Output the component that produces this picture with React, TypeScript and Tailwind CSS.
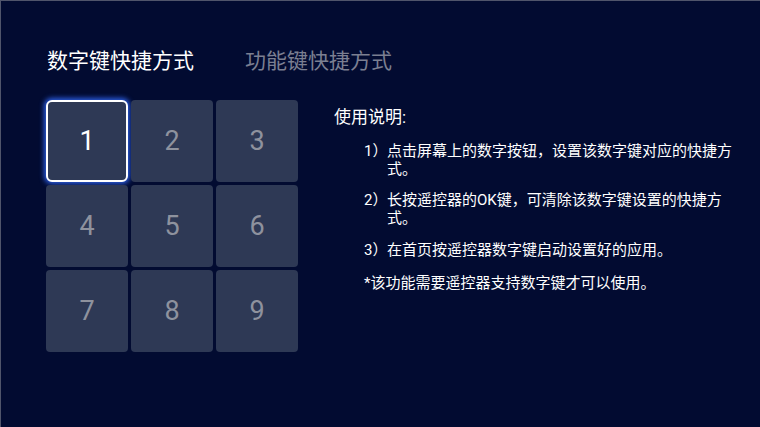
import React from 'react';

const keys = ['1', '2', '3', '4', '5', '6', '7', '8', '9'];

const font = { fontFamily: 'Roboto, "Noto Sans CJK SC", sans-serif' };

export default function App() {
  return (
    <div
      className="w-[760px] h-[427px] bg-[#020b31] border-t border-l border-[#50556b] overflow-hidden"
      style={font}
    >
      {/* Tabs */}
      <div className="flex items-center gap-[51px] pl-[46px] pt-[43px] h-[76px]">
        <span className="text-[21px] leading-[30px] text-white">数字键快捷方式</span>
        <span className="text-[21px] leading-[30px] text-[#7b7f91]">功能键快捷方式</span>
      </div>

      <div className="flex pl-[45px] pt-[23px]">
        {/* Key grid */}
        <div className="grid grid-cols-[82px_82px_82px] grid-rows-[82px_82px_82px] gap-[3px]">
          {keys.map((k, i) =>
            i === 0 ? (
              <div
                key={k}
                className="flex items-center justify-center rounded-[6px] bg-[#2e3955] border-2 border-white shadow-[0_0_5px_2px_#2b5ce0] text-[27px] text-white"
              >
                {k}
              </div>
            ) : (
              <div
                key={k}
                className="flex items-center justify-center rounded-[4px] bg-[#2e3955] text-[27px] text-[#8e929e]"
              >
                {k}
              </div>
            ),
          )}
        </div>

        {/* Instructions */}
        <div className="ml-[36px] pt-[4px] text-white">
          <div className="text-[17px] leading-[26px]">使用说明:</div>
          <div className="pl-[30px] pt-[12px] text-[15px] leading-[18px] w-[400px]">
            <div className="flex">
              <span className="w-[23px] shrink-0">1）</span>
              <span className="w-[350px]">点击屏幕上的数字按钮，设置该数字键对应的快捷方式。</span>
            </div>
            <div className="flex mt-[13px]">
              <span className="w-[23px] shrink-0">2）</span>
              <span className="w-[350px]">长按遥控器的OK键，可清除该数字键设置的快捷方式。</span>
            </div>
            <div className="flex mt-[14px]">
              <span className="w-[23px] shrink-0">3）</span>
              <span>在首页按遥控器数字键启动设置好的应用。</span>
            </div>
            <div className="mt-[15px]">*该功能需要遥控器支持数字键才可以使用。</div>
          </div>
        </div>
      </div>
    </div>
  );
}
